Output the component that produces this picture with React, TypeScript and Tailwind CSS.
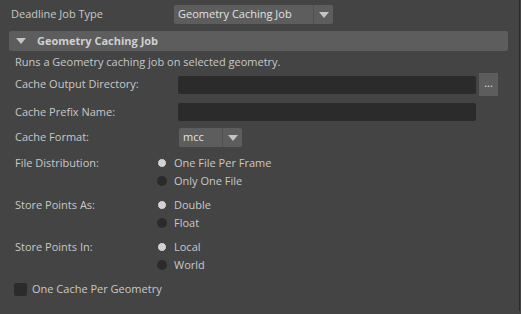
import { ReactNode } from "react";

const font = { fontFamily: '"Open Sans", "Liberation Sans", sans-serif' };

function Caret() {
    return (
        <svg width="10" height="6" viewBox="0 0 10 6" className="block">
            <path d="M0 0 H10 L5 6 Z" fill="#c4c4c4" />
        </svg>
    );
}

function Dropdown({ value, width, arrowLeft }: { value: string; width: string; arrowLeft: string }) {
    return (
        <div className={`flex h-[19px] ${width} rounded-[2px] bg-[#5d5d5d]`}>
            <div className={`${arrowLeft} flex items-center pl-[4px] text-[#e2e2e2]`}>{value}</div>
            <div className="w-px bg-[#4f4f4f]" />
            <div className="flex flex-1 items-center justify-center">
                <Caret />
            </div>
        </div>
    );
}

function Radio({ on, label }: { on?: boolean; label: string }) {
    return (
        <div className="flex h-[18px] items-center">
            <span
                className={`h-[10px] w-[10px] rounded-full ${
                    on ? "border border-[#3a3a3a] bg-[#d2d2d2]" : "bg-[#2b2b2b]"
                }`}
            />
            <span className="ml-[7px]">{label}</span>
        </div>
    );
}

function RadioGroup({ label, options, className }: { label: string; options: string[]; className?: string }) {
    return (
        <div className={`flex ${className ?? ""}`}>
            <div className="flex h-[18px] w-[142px] items-center">{label}</div>
            <div className="flex flex-col">
                {options.map((o, i) => (
                    <Radio key={o} label={o} on={i === 0} />
                ))}
            </div>
        </div>
    );
}

function Field({ label, children, className }: { label: string; children: ReactNode; className?: string }) {
    return (
        <div className={`flex items-center ${className ?? ""}`}>
            <div className="w-[163px]">{label}</div>
            {children}
        </div>
    );
}

export default function App() {
    return (
        <div className="h-[314px] w-[521px] bg-[#444444]">
            <div
                className="h-[311px] w-[520px] overflow-hidden border-r border-[#2a2a2a] text-[11px] text-[#c8c8c8]"
                style={font}
            >
                <div className="mt-[5px] flex h-[19px] items-center">
                    <div className="w-[174px] pl-[11px]">Deadline Job Type</div>
                    <Dropdown value="Geometry Caching Job" width="w-[159px]" arrowLeft="w-[139px]" />
                </div>

                <div className="ml-[9px] mt-[7px] flex h-[20px] w-[499px] items-center rounded-[2px] bg-[#5d5d5d] font-bold text-[#d0d0d0]">
                    <div className="ml-[7px] mr-[11px]">
                        <Caret />
                    </div>
                    Geometry Caching Job
                </div>

                <div className="pl-[15px]">
                    <div className="flex h-[22px] items-center">Runs a Geometry caching job on selected geometry.</div>

                    <Field label="Cache Output Directory:">
                        <div className="h-[18px] w-[298px] rounded-[2px] bg-[#2b2b2b]" />
                        <div className="ml-[3px] flex h-[23px] w-[19px] items-center justify-center bg-[#5d5d5d] pb-[2px] text-[#e0e0e0]">
                            ...
                        </div>
                    </Field>

                    <Field label="Cache Prefix Name:" className="mt-[7px]">
                        <div className="h-[18px] w-[298px] rounded-[2px] bg-[#2b2b2b]" />
                    </Field>

                    <div className="mt-[7px] flex items-center">
                        <div className="w-[164px]">Cache Format:</div>
                        <Dropdown value="mcc" width="w-[63px]" arrowLeft="w-[43px]" />
                    </div>

                    <RadioGroup
                        label="File Distribution:"
                        options={["One File Per Frame", "Only One File"]}
                        className="mt-[7px]"
                    />
                    <RadioGroup label="Store Points As:" options={["Double", "Float"]} className="mt-[6px]" />
                    <RadioGroup label="Store Points In:" options={["Local", "World"]} className="mt-[6px]" />

                    <div className="mt-[9px] flex h-[13px] items-center">
                        <span className="-ml-[1px] h-[13px] w-[13px] rounded-[2px] bg-[#2b2b2b]" />
                        <span className="ml-[5px]">One Cache Per Geometry</span>
                    </div>
                </div>
            </div>
        </div>
    );
}
